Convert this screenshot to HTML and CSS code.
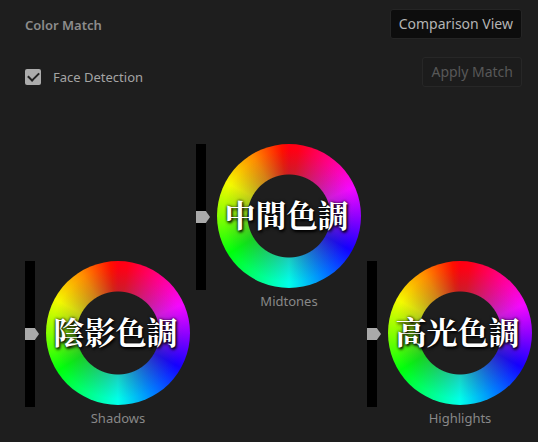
FILE: index.html
```html
<!DOCTYPE html>
<html lang="zh-Hant">
<head>
  <meta charset="UTF-8" />
  <meta name="viewport" content="width=device-width, initial-scale=1" />
  <title>Color Match</title>
  <link rel="stylesheet" href="styles.css">
</head>
<body>
  <main class="panel">
    <header class="match">
      <div class="match-left">
        <h1 class="title">Color Match</h1>
        <label class="face" for="face">
          <input type="checkbox" id="face" checked />
          Face Detection
        </label>
      </div>
      <div class="match-right">
        <button type="button" class="btn">Comparison View</button>
        <button type="button" class="btn btn-apply" disabled>Apply Match</button>
      </div>
    </header>

    <section class="wheels">
      <div class="tone shadows">
        <input class="level" type="range" id="shadows" value="50" />
        <div class="wheel"><span class="tone-name">陰影色調</span></div>
        <label class="caption" for="shadows">Shadows</label>
      </div>
      <div class="tone midtones">
        <input class="level" type="range" id="midtones" value="50" />
        <div class="wheel"><span class="tone-name">中間色調</span></div>
        <label class="caption" for="midtones">Midtones</label>
      </div>
      <div class="tone highlights">
        <input class="level" type="range" id="highlights" value="50" />
        <div class="wheel"><span class="tone-name">高光色調</span></div>
        <label class="caption" for="highlights">Highlights</label>
      </div>
    </section>
  </main>
</body>
</html>
```
FILE: styles.css
```css
* {
  box-sizing: border-box;
}
body {
  margin: 0;
  background: #1e1e1e;
  color: #a4a4a4;
  font-family: "Noto Sans", "Open Sans", sans-serif;
  font-size: 13px;
  line-height: 20px;
}
.match {
  display: flex;
  justify-content: space-between;
  padding: 9px 16px 0 25px;
}
.match-left {
  display: flex;
  flex-direction: column;
  gap: 32px;
  padding-top: 6px;
}
.title {
  margin: 0;
  font-size: 13px;
  font-weight: 600;
  color: #8c8c8c;
}
.face {
  display: flex;
  align-items: center;
  gap: 12px;
}
.face input {
  appearance: none;
  width: 16px;
  height: 16px;
  margin: 0;
  border-radius: 2px;
  background: #acacac;
  display: grid;
  place-items: center;
}
.face input:checked::before {
  content: "";
  width: 9px;
  height: 5px;
  margin-bottom: 3px;
  border-left: 2px solid #222;
  border-bottom: 2px solid #222;
  transform: rotate(-45deg);
}
.match-right {
  display: flex;
  flex-direction: column;
  align-items: flex-end;
  gap: 18px;
}
.btn {
  height: 30px;
  padding: 0 8px;
  border: 1px solid #252525;
  border-radius: 3px;
  background: #0d0d0d;
  color: #b4b4b4;
  font: inherit;
  font-size: 14px;
}
.btn-apply {
  border-color: #272727;
  background: #1c1c1c;
  color: #585858;
}

/* the middle wheel sits one step above the outer two */
.wheels {
  display: grid;
  grid-template-columns: repeat(3, 165px);
  grid-template-rows: 117px auto 117px;
  justify-content: space-between;
  padding: 57px 6px 0 25px;
}
.tone {
  display: grid;
  grid-template-columns: 14px 144px;
  column-gap: 7px;
  row-gap: 1px;
  align-self: start;
}
.shadows {
  grid-area: 2 / 1 / 4 / 2;
}
.midtones {
  grid-area: 1 / 2 / 3 / 3;
}
.highlights {
  grid-area: 2 / 3 / 4 / 4;
}
.level {
  appearance: none;
  writing-mode: vertical-lr;
  direction: rtl;
  width: 14px;
  height: 146px;
  margin: 0;
  background: linear-gradient(#000, #000) left / 10px 100% no-repeat;
}
.level::-webkit-slider-thumb {
  appearance: none;
  width: 14px;
  height: 12px;
  background: #aaa;
  clip-path: polygon(0 0, 70% 0, 100% 50%, 70% 100%, 0 100%);
}
.wheel {
  display: grid;
  place-items: center;
  height: 144px;
  padding: 0 5px 4px 0;
  border-radius: 50%;
  background:
    radial-gradient(circle, #1e1e1e 41px, rgba(90, 90, 90, 0.3) 42px, transparent 66px),
    conic-gradient(#ff0010 0deg, #ff0018 8deg, #ff0090 38deg, #f408ff 66deg,
      #8a00ff 92deg, #1400ff 119deg, #0080ff 150deg, #00ffea 180deg,
      #00ff78 210deg, #00ff0c 238deg, #80ff00 268deg, #f4fa00 298deg,
      #ff8c00 329deg, #ff1000 354deg, #ff0010 360deg);
}
.tone-name {
  color: #fff;
  font-family: "Noto Serif CJK TC", "Noto Sans CJK TC", serif;
  font-size: 31px;
  font-weight: 700;
  line-height: 40px;
  white-space: nowrap;
  text-shadow: 1px 2px 3px #000, 0 0 3px #000;
}
.caption {
  grid-column: 2;
  text-align: center;
  color: #888;
}
```
